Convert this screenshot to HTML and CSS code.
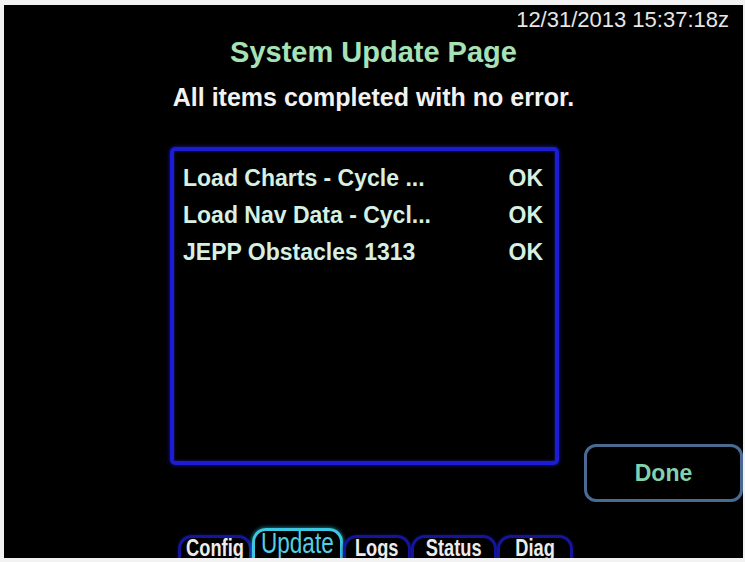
FILE: index.html
```html
<!DOCTYPE html>
<html lang="en">
<head>
<meta charset="utf-8">
<title>System Update Page</title>
<link rel="stylesheet" href="styles.css">
</head>
<body>
<div class="screen">
  <div class="datetime">12/31/2013 15:37:18z</div>
  <h1 class="title">System Update Page</h1>
  <p class="status-msg">All items completed with no error.</p>
  <div class="middle">
    <div class="list-box">
      <div class="row"><span class="name">Load Charts - Cycle ...</span><span class="result">OK</span></div>
      <div class="row"><span class="name">Load Nav Data - Cycl...</span><span class="result">OK</span></div>
      <div class="row"><span class="name">JEPP Obstacles 1313</span><span class="result">OK</span></div>
    </div>
    <div class="done-btn">Done</div>
  </div>
  <div class="tabs">
    <div class="tab tab-config"><span class="tab-label">Config</span></div>
    <div class="tab tab-update active"><span class="tab-label">Update</span></div>
    <div class="tab tab-logs"><span class="tab-label">Logs</span></div>
    <div class="tab tab-status"><span class="tab-label">Status</span></div>
    <div class="tab tab-diag"><span class="tab-label">Diag</span></div>
  </div>
</div>
</body>
</html>
```
FILE: styles.css
```css
html, body {
  margin: 0;
  padding: 0;
  background: #f2f2f2;
}

.screen {
  margin: 5px 3px 0 4px;
  width: 739px;
  height: 553px;
  background: #000;
  overflow: hidden;
  display: flex;
  flex-direction: column;
  font-family: "Liberation Sans", Arial, sans-serif;
}

.datetime {
  margin-top: 4px;
  padding-right: 14px;
  text-align: right;
  font-size: 22px;
  line-height: 22px;
  color: #e6e6e6;
}

.title {
  margin: 7px 0 0;
  text-align: center;
  font-size: 29px;
  line-height: 28px;
  font-weight: bold;
  color: #a6e2b6;
}

.status-msg {
  margin: 19px 0 0;
  text-align: center;
  font-size: 25px;
  line-height: 25px;
  font-weight: bold;
  color: #f2f2f2;
}

.middle {
  margin-top: 37px;
  display: flex;
  align-items: flex-start;
}

.list-box {
  margin-left: 166px;
  height: 301px;
  width: 367px;
  border: 4px solid #1c1cd2;
  border-radius: 5px;
  box-shadow: 0 0 4px #1a1aa8, inset 0 0 3px #1a1aa8;
  padding: 9px 12px 0 9px;
}

.row {
  display: flex;
  justify-content: space-between;
  font-size: 23px;
  line-height: 37px;
  font-weight: bold;
  color: #d6f0e2;
}

.done-btn {
  margin-left: 25px;
  margin-top: 297px;
  width: 153px;
  height: 52px;
  border: 3px solid #4a6a92;
  border-radius: 12px;
  display: flex;
  align-items: center;
  justify-content: center;
  font-size: 23px;
  font-weight: bold;
  color: #80d2ae;
  flex-shrink: 0;
}

.tabs {
  margin-top: auto;
  margin-left: 174px;
  height: 30px;
  display: flex;
  align-items: flex-start;
}

.tab {
  box-sizing: border-box;
  height: 40px;
  margin-top: 7px;
  border: 3px solid #15159c;
  border-bottom: none;
  border-radius: 14px 14px 0 0;
  box-shadow: 0 0 3px #0e0e70;
  display: flex;
  justify-content: center;
  font-weight: bold;
  font-size: 24px;
  line-height: 19px;
  color: #ececec;
}

.tab-label {
  display: inline-block;
  transform: scaleX(0.76);
}

.tab-config { width: 74px; }
.tab-update { width: 91px; }
.tab-logs { width: 68px; }
.tab-status { width: 86px; }
.tab-diag { width: 76px; }

.tab.active {
  margin-top: 0;
  border-color: #3cc8e0;
  box-shadow: 0 0 4px #2a9fb8;
  font-weight: normal;
  font-size: 30px;
  line-height: 23px;
  color: #52d0e2;
}

.tab.active .tab-label {
  transform: scaleX(0.75);
}
```
